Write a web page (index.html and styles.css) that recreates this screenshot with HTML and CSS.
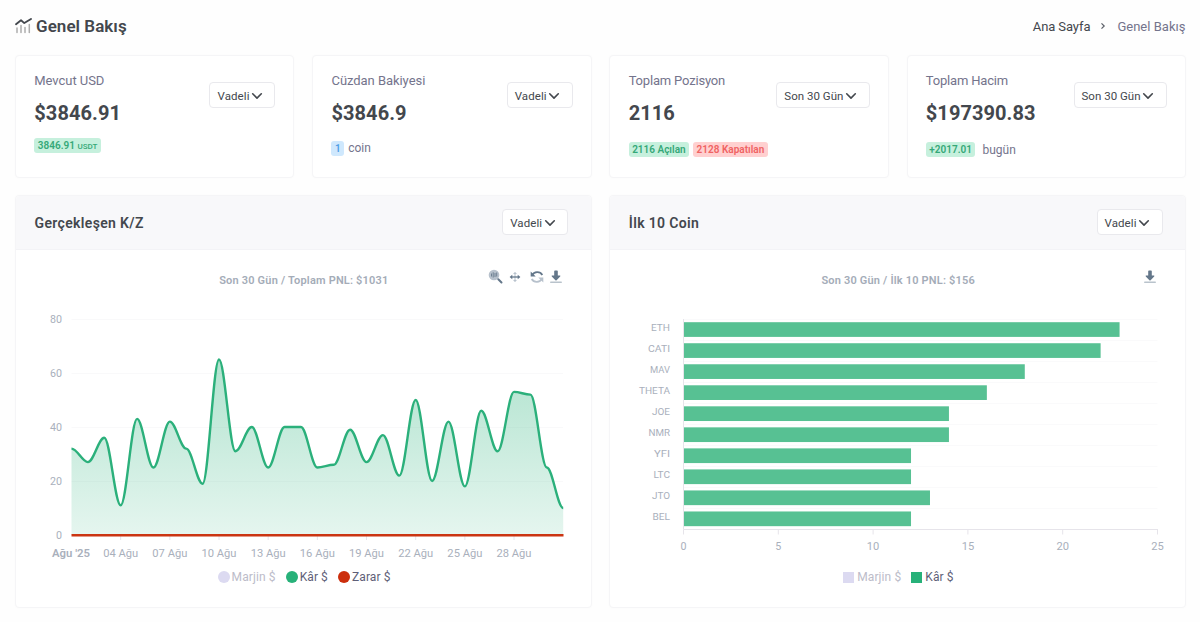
FILE: index.html
```html
<!DOCTYPE html>
<html lang="tr">
<head>
<meta charset="utf-8">
<title>Genel Bakış</title>
<link rel="stylesheet" href="styles.css">
</head>
<body>
<svg class="sprite" width="0" height="0">
  <symbol id="chevron" viewBox="0 0 12 8"><path d="M1.7 1.8 6 6.1l4.3-4.3" fill="none" stroke="currentColor" stroke-width="1.6" stroke-linecap="round" stroke-linejoin="round"/></symbol>
  <symbol id="download" viewBox="0 0 12 14"><path d="M4.2 1.2q0-.8.8-.8h2q.8 0 .8.8v4.4h2.1q.9.2.3.9L6.6 10.2q-.6.5-1.2 0L1.8 6.5q-.6-.7.3-.9h2.1z" fill="#64778a"/><path d="M.8 12.2h10.4" stroke="#b9c3cc" stroke-width="1.6" stroke-linecap="round"/></symbol>
</svg>
<main class="page">
  <header class="topbar">
    <h1 class="page-title">
      <svg class="title-icon" width="17" height="16" viewBox="0 0 17 16"><path d="M1 6.2 6 2.2l3.3 2.9L16 .9" fill="none" stroke="#43474d" stroke-width="1.8" stroke-linecap="round" stroke-linejoin="round"/><path d="M2 10v4.4M6 7.4v7M10 9.6v4.8M14.3 6.6v7.8" stroke="#adadad" stroke-width="1.5" stroke-linecap="round"/></svg>
      <span>Genel Bakış</span>
    </h1>
    <nav class="breadcrumb">
      <a class="crumb-link">Ana Sayfa</a>
      <svg width="6" height="8" viewBox="0 0 6 8"><path d="M1.5 1.3 4.2 4 1.5 6.7" fill="none" stroke="#5b5f68" stroke-width="1.2"/></svg>
      <span>Genel Bakış</span>
    </nav>
  </header>

  <section class="stats">
    <article class="card stat">
      <div>
        <div class="stat-label">Mevcut USD</div>
        <div class="stat-value">$3846.91</div>
        <div class="stat-foot foot-high"><span class="badge green">3846.91 <small>USDT</small></span></div>
      </div>
      <button class="select">Vadeli<svg width="12" height="8"><use href="#chevron"/></svg></button>
    </article>
    <article class="card stat">
      <div>
        <div class="stat-label">Cüzdan Bakiyesi</div>
        <div class="stat-value">$3846.9</div>
        <div class="stat-foot foot-mid"><span class="badge blue">1</span><span class="note">coin</span></div>
      </div>
      <button class="select">Vadeli<svg width="12" height="8"><use href="#chevron"/></svg></button>
    </article>
    <article class="card stat">
      <div>
        <div class="stat-label tight">Toplam Pozisyon</div>
        <div class="stat-value">2116</div>
        <div class="stat-foot"><span class="badge green">2116 Açılan</span><span class="badge red">2128 Kapatılan</span></div>
      </div>
      <button class="select wide">Son 30 Gün<svg width="12" height="8"><use href="#chevron"/></svg></button>
    </article>
    <article class="card stat">
      <div>
        <div class="stat-label tight">Toplam Hacim</div>
        <div class="stat-value">$197390.83</div>
        <div class="stat-foot"><span class="badge green">+2017.01</span><span class="note today">bugün</span></div>
      </div>
      <button class="select wide">Son 30 Gün<svg width="12" height="8"><use href="#chevron"/></svg></button>
    </article>
  </section>

  <section class="charts">
    <article class="card panel">
      <header class="panel-head">
        <h2>Gerçekleşen K/Z</h2>
        <button class="select">Vadeli<svg width="12" height="8"><use href="#chevron"/></svg></button>
      </header>
      <div class="chart-head">
        <span></span>
        <h3 class="chart-title">Son 30 Gün / Toplam PNL: $1031</h3>
        <div class="tools">
          <svg width="15" height="15" viewBox="0 0 15 15"><circle cx="6" cy="6" r="5.3" fill="#b7c1cc"/><path d="M3.5 4.5v3M5.2 3.3v5.2M7 4v4M8.7 3.5v4" stroke="#6f8193"/><path d="m10.3 10.3 3.2 3.2" stroke="#64778a" stroke-width="2" stroke-linecap="round"/></svg>
          <svg class="pan" width="12" height="12" viewBox="0 0 12 12"><path d="M6 2.8v6.4M4.8 2.6 6 1.4l1.2 1.2zM4.8 9.4 6 10.6l1.2-1.2z" stroke="#b7c1cc" fill="#b7c1cc"/><path d="M2 6h8" stroke="#64778a" stroke-width="1.3"/><path d="M3.3 3.8 .6 6l2.7 2.2zM8.7 3.8 11.4 6 8.7 8.2z" fill="#64778a"/></svg>
          <svg class="reset" width="14" height="14" viewBox="0 0 14 14"><path d="M2.2 5.2C4 1.6 9.8.9 12.3 5" fill="none" stroke="#64778a" stroke-width="1.8"/><path d="M.7 1.5v5h5z" fill="#64778a"/><path d="M11.8 8.8C10 12.4 4.2 13.1 1.7 9" fill="none" stroke="#b7c1cc" stroke-width="1.8"/><path d="M13.3 12.5v-5h-5z" fill="#b7c1cc"/></svg>
          <svg class="dl" width="12" height="14"><use href="#download"/></svg>
        </div>
      </div>
      <svg id="pnl-chart" class="plot" width="573" height="260" viewBox="16 306 573 260"></svg>
      <div class="legend round">
        <span class="off"><i class="lilac"></i>Marjin $</span><span><i class="profit"></i>Kâr $</span><span><i class="loss"></i>Zarar $</span>
      </div>
    </article>
    <article class="card panel">
      <header class="panel-head">
        <h2>İlk 10 Coin</h2>
        <button class="select">Vadeli<svg width="12" height="8"><use href="#chevron"/></svg></button>
      </header>
      <div class="chart-head">
        <span></span>
        <h3 class="chart-title">Son 30 Gün / İlk 10 PNL: $156</h3>
        <div class="tools"><svg class="dl" width="12" height="14"><use href="#download"/></svg></div>
      </div>
      <svg id="coin-chart" class="plot" width="573" height="260" viewBox="610 306 573 260"></svg>
      <div class="legend square">
        <span class="off"><i class="lilac"></i>Marjin $</span><span><i class="profit"></i>Kâr $</span>
      </div>
    </article>
  </section>
</main>
<script src="charts.js"></script>
</body>
</html>
```
FILE: styles.css
```css
* { box-sizing: border-box; }
body { margin: 0; background: #fefefe; color: #43474d; font-family: "Roboto", "Noto Sans", sans-serif; font-size: 13px; }
h1, h2, h3 { margin: 0; }
.sprite { position: absolute; }
.page { padding: 0 14px 0 15px; height: 622px; overflow: hidden; }

.topbar { height: 54.5px; padding-bottom: 2px; display: flex; align-items: center; justify-content: space-between; }
.page-title { display: flex; align-items: center; gap: 4px; font-size: 17px; font-weight: 600; letter-spacing: .05px; }
.breadcrumb { display: flex; align-items: center; color: #74748c; font-size: 13px; letter-spacing: .02px; padding-right: .5px; }
.breadcrumb svg { margin: 0 11px 0 10px; }
.crumb-link { color: #43474d; letter-spacing: -.1px; }

.card { background: #fff; border: 1px solid #f5f5f7; border-radius: 4px; box-shadow: 0 0 3px rgba(40, 40, 70, .02); }
.stats { display: grid; grid-template-columns: repeat(4, 1fr); gap: 17.7px; }
.stat { height: 123px; padding: 0 18px 0 18.3px; display: flex; justify-content: space-between; align-items: flex-start; }
.stat-label { margin-top: 16px; line-height: 18px; color: #74748c; letter-spacing: -.05px; }
.stat-label.tight { letter-spacing: -.18px; }
.stat-value { margin-top: 9.5px; line-height: 28px; font-size: 20px; font-weight: 700; letter-spacing: .07px; }
.stat-foot { margin-top: 14.5px; height: 16px; display: flex; align-items: center; gap: 4px; }
.foot-high { margin-top: 10.5px; }
.foot-mid { margin-top: 13px; }
.badge { height: 15px; line-height: 15px; padding: 0 3.5px; border-radius: 3px; font-size: 10px; font-weight: 600; white-space: nowrap; }
.badge small { font-size: 8px; font-weight: 500; }
.green { background: #c6f0dd; color: #35a878; }
.blue { background: #cfe8fd; color: #4e9fe6; }
.red { background: #ffd0d0; color: #f06363; }
.note { color: #74748c; font-size: 12px; }
.today { margin-left: 3px; }

.select { width: 66px; height: 26px; margin: 26.5px 0 0; padding: 1px 0 0 7px; display: flex; align-items: center; gap: 1.5px; flex: none; background: #fff; border: 1px solid #e9e9ed; border-radius: 4px; color: #43474d; font: 400 11.5px "Roboto", sans-serif; letter-spacing: .1px; white-space: nowrap; }
.wide { width: 93.5px; letter-spacing: .02px; }

.charts { margin-top: 17.5px; display: grid; grid-template-columns: repeat(2, 1fr); gap: 17.7px; }
.panel { height: 413px; }
.panel-head { height: 54px; padding: 0 22.5px 1px 18.5px; display: flex; align-items: center; justify-content: space-between; background: #f8f8fa; border-bottom: 1px solid #f3f3f6; border-radius: 4px 4px 0 0; }
.panel-head .select { margin: 0; }
.panel-head h2 { font-size: 14px; font-weight: 600; letter-spacing: .35px; padding-top: 1px; }
.chart-head { height: 56px; display: grid; grid-template-columns: 1fr auto 1fr; align-items: center; padding: 4px 29px 0 30px; }
.chart-title { color: #a4acb8; font-size: 11px; font-weight: 600; letter-spacing: .19px; }
.tools { display: flex; justify-content: flex-end; align-items: center; margin-top: -7px; }
.pan { margin-left: 6px; }
.reset { margin-left: 9px; }
.dl { margin-left: 6px; }
.plot { display: block; font-size: 10.5px; fill: #a9b0bc; }
.plot .bold { font-weight: 600; }
.plot .names { font-size: 9.5px; }
.legend { height: 22px; padding-left: 1.5px; display: flex; align-items: center; justify-content: center; gap: 10px; color: #5f5f78; font-size: 12px; letter-spacing: .1px; }
.legend span { display: flex; align-items: center; gap: 2px; }
.legend i { width: 12px; height: 12px; border-radius: 50%; }
.legend .off { color: #bcbcc9; }
.legend.square i { width: 11px; height: 11px; border-radius: 0; }
.legend.square span { gap: 3px; }
.lilac { background: #dcdaf1; }
.profit { background: #27b179; }
.loss { background: #cc2f0d; }
```
FILE: charts.js
```js
function text(x, y, label, width, anchor, cls) {
  return `<text x="${x}" y="${y}" text-anchor="${anchor}" class="${cls || ''}" textLength="${width}" lengthAdjust="spacingAndGlyphs">${label}</text>`;
}

function drawPnl() {
  const values = [32, 27, 36, 11, 43, 25, 42, 32, 19, 65, 31, 40, 25, 40, 40, 25, 26, 39, 27, 37, 22, 50, 20, 42, 18, 46, 31, 53, 52, 25, 10];
  const left = 71.5, step = 16.39, base = 535, unit = 2.7;
  const x = i => left + i * step;
  const y = v => base - v * unit;
  let line = `M${x(0)} ${y(values[0])}`;
  for (let i = 1; i < values.length; i++) {
    const c = step * 0.35;
    line += `C${x(i - 1) + c} ${y(values[i - 1])} ${x(i) - c} ${y(values[i])} ${x(i)} ${y(values[i])}`;
  }
  let out = '<defs><linearGradient id="fade" x1="0" y1="0" x2="0" y2="1"><stop offset="0" stop-color="#27b179" stop-opacity=".36"/><stop offset="1" stop-color="#27b179" stop-opacity=".12"/></linearGradient></defs>';
  for (const v of [80, 60, 40, 20]) out += `<path d="M${left} ${Math.round(y(v)) + .5}H563" stroke="#f9f9fa"/>`;
  for (const v of [80, 60, 40, 20, 0]) out += text(62, y(v) + 4, v, v ? 12 : 6, 'end');
  out += `<path d="${line}V${base}H${left}Z" fill="url(#fade)"/><path d="${line}" fill="none" stroke="#2bb07b" stroke-width="2.4"/>`;
  for (let i = 3; i < 30; i += 3) out += `<path d="M${x(i)} 536v4" stroke="#e6e4ee"/>`;
  out += `<path d="M${left} 535.3H563.5" stroke="#cb3512" stroke-width="2.6"/>`;
  out += text(71, 557, "Ağu '25", 38, 'middle', 'bold');
  for (let i = 3; i < 30; i += 3) out += text(x(i), 557, `${String(i + 1).padStart(2, '0')} Ağu`, 35, 'middle');
  document.getElementById('pnl-chart').innerHTML = out;
}

function drawCoins() {
  const coins = [['ETH', 23, 19], ['CATI', 22, 22], ['MAV', 18, 20], ['THETA', 16, 31], ['JOE', 14, 18], ['NMR', 14, 21.5], ['YFI', 12, 16], ['LTC', 12, 16.5], ['JTO', 13, 18], ['BEL', 12, 17.5]];
  const left = 683.5, top = 319, row = 21.03, unit = 18.96;
  let out = '';
  coins.forEach(([name, value, width], i) => {
    const y = top + i * row;
    out += `<path d="M${left} ${Math.round(y) + .5}H1157.5" stroke="#fafafb"/>`;
    out += `<rect x="${left}" y="${y + 3.2}" width="${value * unit}" height="14.7" fill="#57c193"/>`;
    out += text(670, y + 12, name, width, 'end', 'names');
  });
  out += '<path d="M683.5 319V529.5H1158" fill="none" stroke="#e6e4ea"/>';
  for (let v = 0; v <= 25; v += 5) {
    const x = left + v * unit;
    out += `<path d="M${x} 529.5v5" stroke="#e6e4ea"/>` + text(x, 549.5, v, v < 10 ? 6 : 12.5, 'middle');
  }
  document.getElementById('coin-chart').innerHTML = out;
}

drawPnl();
drawCoins();
```
